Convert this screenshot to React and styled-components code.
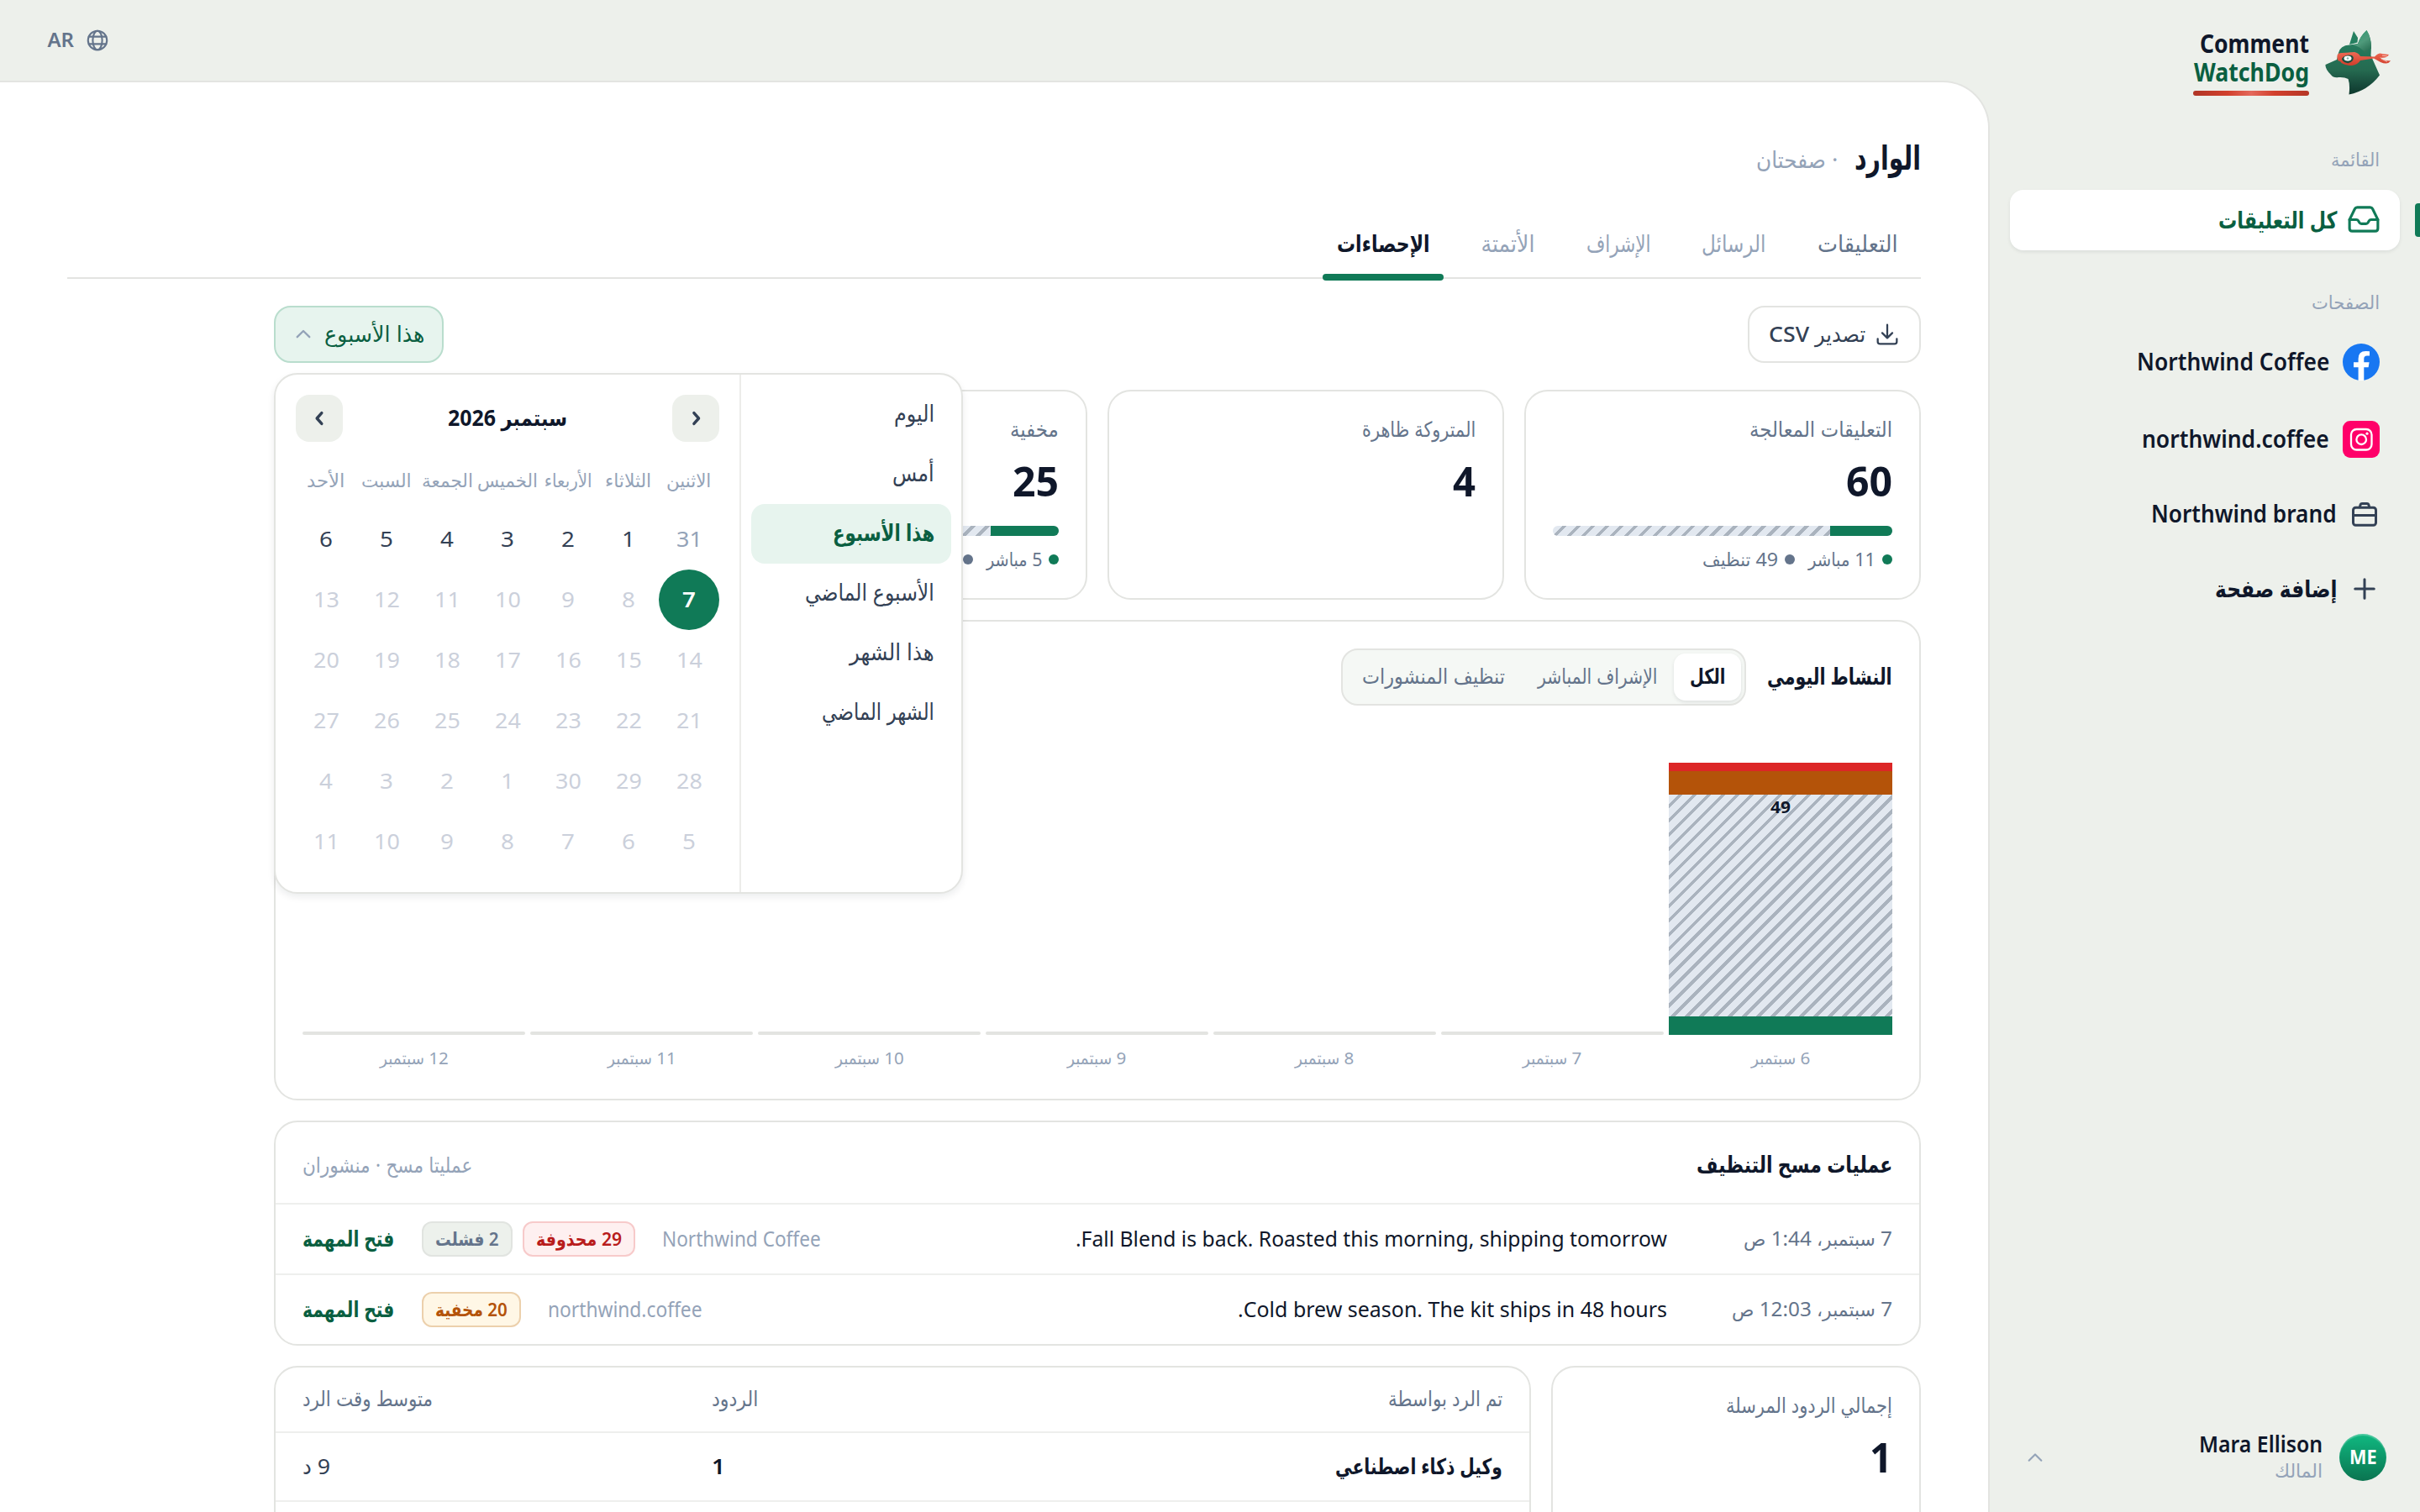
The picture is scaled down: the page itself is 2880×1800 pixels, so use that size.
import React, { useLayoutEffect, useRef, useState } from "react";
import styled, { createGlobalStyle, css } from "styled-components";

const weekDays = [
	["الاثنين", 53],
	["الثلاثاء", 55],
	["الأربعاء", 57],
	["الخميس", 72],
	["الجمعة", 61],
	["السبت", 60],
	["الأحد", 45],
];

const days = [
	31, 1, 2, 3, 4, 5, 6, 7, 8, 9, 10, 11, 12, 13, 14, 15, 16, 17, 18, 19, 20,
	21, 22, 23, 24, 25, 26, 27, 28, 29, 30, 1, 2, 3, 4, 5, 6, 7, 8, 9, 10, 11,
];

const presets = [
	["اليوم", 48],
	["أمس", 50],
	["هذا الأسبوع", 121],
	["الأسبوع الماضي", 154],
	["هذا الشهر", 101],
	["الشهر الماضي", 134],
];

const tabs = [
	{ label: "التعليقات", width: 152, text: 96, tone: "#64748b" },
	{ label: "الرسائل", width: 133, text: 76, tone: "#94a3b8" },
	{ label: "الإشراف", width: 134, text: 77, tone: "#94a3b8" },
	{ label: "الأتمتة", width: 121, text: 64, tone: "#94a3b8" },
	{ label: "الإحصاءات", width: 168, text: 111, tone: "#0f172a", active: true },
];

const stats = [
	{ label: "التعليقات المعالجة", width: 170, value: "60", valueWidth: 55, live: 11, liveWidth: 80, sweep: 49, sweepWidth: 90 },
	{ label: "المتروكة ظاهرة", width: 135, value: "4", valueWidth: 27 },
	{ label: "مخفية", width: 58, value: "25", valueWidth: 55, live: 5, liveWidth: 66, sweep: 20, sweepWidth: 90 },
	{ label: "محذوفة", width: 74, value: "31", valueWidth: 55, live: 2, liveWidth: 66, sweep: 29, sweepWidth: 90 },
];

const chartDays = [
	["6 سبتمبر", 70],
	["7 سبتمبر", 70],
	["8 سبتمبر", 70],
	["9 سبتمبر", 70],
	["10 سبتمبر", 82],
	["11 سبتمبر", 82],
	["12 سبتمبر", 82],
];

const sweeps = [
	{
		date: "7 سبتمبر، 1:44 ص",
		dateWidth: 177,
		post: "Fall Blend is back. Roasted this morning, shipping tomorrow.",
		postWidth: 704,
		page: "Northwind Coffee",
		pageWidth: 189,
		pills: [
			{ text: "29 محذوفة", width: 102, box: 134, kind: "red" },
			{ text: "2 فشلت", width: 75, box: 108, kind: "grey" },
		],
	},
	{
		date: "7 سبتمبر، 12:03 ص",
		dateWidth: 191,
		post: "Cold brew season. The kit ships in 48 hours.",
		postWidth: 511,
		page: "northwind.coffee",
		pageWidth: 184,
		pills: [{ text: "20 مخفية", width: 86, box: 118, kind: "amber" }],
	},
];

// Squeezes or stretches one line of text so that it takes exactly `w` pixels
const Fit = ({ w, children }) => {
	const ref = useRef(null);
	const [scale, setScale] = useState(1);

	useLayoutEffect(() => {
		setScale(w / ref.current.offsetWidth);
	}, [w, children]);

	return (
		<FitBox $w={w}>
			<FitText ref={ref} style={{ transform: `translateY(-1px) scaleX(${scale})` }}>
				{children}
			</FitText>
		</FitBox>
	);
};

const Icon = ({ size, stroke = 1.5, children }) => (
	<svg
		width={size}
		height={size}
		viewBox="0 0 24 24"
		fill="none"
		stroke="currentColor"
		strokeWidth={stroke}
		strokeLinecap="round"
		strokeLinejoin="round"
	>
		{children}
	</svg>
);

const DogLogo = () => (
	<svg width="80" height="80" viewBox="0 0 80 80">
		<defs>
			<linearGradient id="head" x1="0" y1="0" x2="0" y2="1">
				<stop offset="0" stopColor="#2f8f6b" />
				<stop offset="0.3" stopColor="#25775a" />
				<stop offset="0.62" stopColor="#256a50" />
				<stop offset="0.85" stopColor="#174a3b" />
				<stop offset="1" stopColor="#0d382c" />
			</linearGradient>
			<linearGradient id="ear" x1="0" y1="0" x2="0.5" y2="1">
				<stop offset="0" stopColor="#2c9a70" />
				<stop offset="0.6" stopColor="#4f9a7b" />
				<stop offset="1" stopColor="#2d7458" />
			</linearGradient>
			<linearGradient id="mask" x1="0" y1="0" x2="0" y2="1">
				<stop offset="0" stopColor="#ef6a54" />
				<stop offset="1" stopColor="#cf3d2b" />
			</linearGradient>
		</defs>
		<path d="M30 18 L35 2 L40 10 L39.500 15.500 Q34 17 30 18Z" fill="#258060" />
		<path
			d="M17 28 Q19 19 30 18.500 L40 17 Q43 8 50.500 1 Q56 10 56 20 L55.500 31 L66 54.500 Q52 73 29.500 77.500 Q31 66 28.500 59 Q24 56.500 17 57 Q11 58 8 54 Q1 47 1.500 42 L15 36Z"
			fill="url(#head)"
		/>
		<path d="M40 17 Q43 8 50.500 1 Q56 10 56 23 Q53 22 49.500 29 Q43 20 34 18.500Z" fill="url(#ear)" />
		<path
			d="M15.500 31 Q16 28 21 28 L36 27 Q41 28 43 32 L60 32.500 Q65 27 69 29 L77 30 Q74 35 66 33.500 Q72 38 79 37 Q76 43 67 39 L59 34.500 L43 37 Q40 42 33 43 Q22 43 19 38 Q15 38 15.500 31Z"
			fill="url(#mask)"
		/>
		<path d="M69 31 L75 32 M68 35 L75 38.500" stroke="#f7d7cf" strokeWidth="0.800" fill="none" />
		<path d="M21.500 34 Q26 29 33 31 Q36 33 34 37 Q30 42 24 39 Q20 37 21.500 34Z" fill="#1c4f3f" />
		<ellipse cx="28" cy="34.500" rx="4.500" ry="3" fill="#fff" />
		<circle cx="28" cy="34.500" r="1.300" fill="#7fb9a5" />
	</svg>
);

const Calendar = () => (
	<CalendarBox>
		<MonthRow>
			<MonthButton>
				<Icon size={34} stroke={2.4}>
					<path d="M10.500 7.500l4 4.500-4 4.500" />
				</Icon>
			</MonthButton>
			<Fit w={142}>سبتمبر 2026</Fit>
			<MonthButton>
				<Icon size={34} stroke={2.4}>
					<path d="M14 7.500l-4 4.500 4 4.500" />
				</Icon>
			</MonthButton>
		</MonthRow>
		<WeekRow>
			{weekDays.map(([name, w]) => (
				<WeekDay key={name}>
					<Fit w={w}>{name}</Fit>
				</WeekDay>
			))}
		</WeekRow>
		<DayGrid>
			{days.map((day, index) => (
				<Day key={index} $selected={index === 7} $outside={index === 0} $disabled={index > 7}>
					<Fit w={String(day).length > 1 ? 31 : 16}>{day}</Fit>
				</Day>
			))}
		</DayGrid>
	</CalendarBox>
);

const App = () => (
	<Shell>
		<GlobalStyle />
		<Sidebar>
			<Brand>
				<DogLogo />
				<BrandName>
					<BrandLine $color="#0f172a">
						<Fit w={130}>Comment</Fit>
					</BrandLine>
					<BrandLine $color="#0a5f41">
						<Fit w={137}>WatchDog</Fit>
					</BrandLine>
					<BrandRule />
				</BrandName>
			</Brand>
			<MenuLabel>
				<Fit w={58}>القائمة</Fit>
			</MenuLabel>
			<ActiveItem>
				<Icon size={44} stroke={1.7}>
					<path d="M2.800 12.300 L6.200 5.300 Q6.700 4.300 7.800 4.300 H16.200 Q17.300 4.300 17.800 5.300 L21.200 12.300 V18 Q21.200 19.700 19.500 19.700 H4.500 Q2.800 19.700 2.800 18 Z" />
					<path d="M2.800 12.300 H7.200 Q8.100 12.300 8.500 13 L9.200 14.200 Q9.600 14.900 10.500 14.900 H13.500 Q14.400 14.900 14.800 14.200 L15.500 13 Q15.900 12.300 16.800 12.300 H21.200" />
				</Icon>
				<Fit w={141}>كل التعليقات</Fit>
			</ActiveItem>
			<MenuLabel $pages>
				<Fit w={81}>الصفحات</Fit>
			</MenuLabel>
			<PageItem>
				<svg width="44" height="44" viewBox="0 0 44 44">
					<circle cx="22" cy="22" r="22" fill="#1877f2" />
					<path
						d="M18.600 44 V28.300 H13 V22.300 H18.600 V18 Q18.600 8.900 27.500 8.900 Q30 8.900 32 9.300 V14.500 H29 Q25.300 14.500 25.300 18 V22.300 H31.600 L30.600 28.300 H25.300 V44Z"
						fill="#fff"
					/>
				</svg>
				<Fit w={229}>Northwind Coffee</Fit>
			</PageItem>
			<PageItem>
				<svg width="44" height="44" viewBox="0 0 44 44">
					<rect width="44" height="44" rx="9" fill="#ff0069" />
					<rect x="10" y="10" width="24.500" height="24.500" rx="6.500" fill="none" stroke="#fff" strokeWidth="2.300" />
					<circle cx="22.200" cy="22.200" r="5.800" fill="none" stroke="#fff" strokeWidth="2.300" />
					<circle cx="29" cy="15.200" r="1.600" fill="#fff" />
				</svg>
				<Fit w={223}>northwind.coffee</Fit>
			</PageItem>
			<PageItem $height={86} $small>
				<Icon size={36} stroke={2}>
					<rect x="3" y="6.800" width="18" height="14" rx="2" />
					<path d="M8.200 6.500 L8.800 4.400 Q9.100 3.600 10 3.600 H14 Q14.900 3.600 15.200 4.400 L15.800 6.500 M3 13 H21" />
				</Icon>
				<Fit w={221}>Northwind brand</Fit>
			</PageItem>
			<PageItem $small>
				<Icon size={36} stroke={2}>
					<path d="M12 4.500 V19.500 M4.500 12 H19.500" />
				</Icon>
				<Fit w={145}>إضافة صفحة</Fit>
			</PageItem>
			<User>
				<Avatar>
					<Fit w={33}>ME</Fit>
				</Avatar>
				<UserText>
					<Fit w={147}>Mara Ellison</Fit>
					<UserRole>
						<Fit w={57}>المالك</Fit>
					</UserRole>
				</UserText>
				<Icon size={32} stroke={1.6}>
					<path d="M6.500 14.800 L12 9.300 L17.500 14.800" />
				</Icon>
			</User>
		</Sidebar>
		<Main>
			<TopBar>
				<Icon size={30} stroke={1.7}>
					<circle cx="12" cy="12" r="9" />
					<ellipse cx="12" cy="12" rx="4.500" ry="9" />
					<path d="M3.800 8.500 H20.200 M3.800 15.500 H20.200" />
				</Icon>
				<Fit w={32}>AR</Fit>
			</TopBar>
			<Panel>
				<TitleRow>
					<Title>
						<Fit w={79}>الوارد</Fit>
					</Title>
					<Subtitle>
						<Fit w={97}>· صفحتان</Fit>
					</Subtitle>
				</TitleRow>
				<Tabs>
					{tabs.map((tab) => (
						<Tab key={tab.label} $w={tab.width} $color={tab.tone} $active={tab.active}>
							<Fit w={tab.text}>{tab.label}</Fit>
						</Tab>
					))}
				</Tabs>
				<Content>
					<Toolbar>
						<ExportButton>
							<Icon size={32} stroke={1.7}>
								<path d="M12 3.500 V15 M7.500 10.800 L12 15.300 L16.500 10.800 M3.500 16 V18.500 Q3.500 20.500 5.500 20.500 H18.500 Q20.500 20.500 20.500 18.500 V16" />
							</Icon>
							<Fit w={115}>تصدير CSV</Fit>
						</ExportButton>
						<RangePicker>
							<RangeButton>
								<Fit w={119}>هذا الأسبوع</Fit>
								<Icon size={30} stroke={1.9}>
									<path d="M6.200 14.500 L12 8.800 L17.800 14.500" />
								</Icon>
							</RangeButton>
							<Popover>
								<Presets>
									{presets.map(([label, w], index) => (
										<Preset key={label} $active={index === 2}>
											<Fit w={w}>{label}</Fit>
										</Preset>
									))}
								</Presets>
								<Calendar />
							</Popover>
						</RangePicker>
					</Toolbar>
					<StatGrid>
						{stats.map((stat) => (
							<StatCard key={stat.label}>
								<StatLabel>
									<Fit w={stat.width}>{stat.label}</Fit>
								</StatLabel>
								<StatValue>
									<Fit w={stat.valueWidth}>{stat.value}</Fit>
								</StatValue>
								{stat.live && (
									<>
										<SplitBar>
											<SplitLive style={{ width: `${(stat.live / stat.value) * 100}%` }} />
										</SplitBar>
										<Legend>
											<Dot $color="#107a57" />
											<Fit w={stat.liveWidth}>{stat.live} مباشر</Fit>
											<Dot $color="#64748b" $spaced />
											<Fit w={stat.sweepWidth}>{stat.sweep} تنظيف</Fit>
										</Legend>
									</>
								)}
							</StatCard>
						))}
					</StatGrid>
					<ChartCard>
						<ChartHead>
							<CardTitle>
								<Fit w={149}>النشاط اليومي</Fit>
							</CardTitle>
							<Segments>
								<Segment $w={80} $active>
									<Fit w={42}>الكل</Fit>
								</Segment>
								<Segment $w={182}>
									<Fit w={142}>الإشراف المباشر</Fit>
								</Segment>
								<Segment $w={209}>
									<Fit w={170}>تنظيف المنشورات</Fit>
								</Segment>
							</Segments>
						</ChartHead>
						<Chart>
							{chartDays.map(([label, w], index) => (
								<ChartColumn key={label}>
									{index === 0 ? (
										<>
											<BarPart $h={10} $color="#dc2626" />
											<BarPart $h={28} $color="#b45309" />
											<SweepPart>
												<Fit w={24}>49</Fit>
											</SweepPart>
											<BarPart $h={22} $color="#107a57" />
										</>
									) : (
										<EmptyBar />
									)}
									<ChartLabel>
										<Fit w={w}>{label}</Fit>
									</ChartLabel>
								</ChartColumn>
							))}
						</Chart>
					</ChartCard>
					<Card>
						<SweepHead>
							<CardTitle>
								<Fit w={233}>عمليات مسح التنظيف</Fit>
							</CardTitle>
							<SweepMeta>
								<Fit w={202}>عمليتا مسح · منشوران</Fit>
							</SweepMeta>
						</SweepHead>
						{sweeps.map((sweep) => (
							<SweepRow key={sweep.post}>
								<SweepDate>
									<Fit w={sweep.dateWidth}>{sweep.date}</Fit>
								</SweepDate>
								<SweepPost>
									<Fit w={sweep.postWidth}>{sweep.post}</Fit>
								</SweepPost>
								<SweepPage>
									<Fit w={sweep.pageWidth}>{sweep.page}</Fit>
								</SweepPage>
								<Pills>
									{sweep.pills.map((pill) => (
										<Pill key={pill.text} $w={pill.box} $kind={pill.kind}>
											<Fit w={pill.width}>{pill.text}</Fit>
										</Pill>
									))}
								</Pills>
								<SweepLink>
									<Fit w={109}>فتح المهمة</Fit>
								</SweepLink>
							</SweepRow>
						))}
					</Card>
					<ReplyGrid>
						<StatCard>
							<StatLabel>
								<Fit w={198}>إجمالي الردود المرسلة</Fit>
							</StatLabel>
							<StatValue>
								<Fit w={27}>1</Fit>
							</StatValue>
						</StatCard>
						<Card>
							<ReplyHead>
								<Fit w={136}>تم الرد بواسطة</Fit>
								<Fit w={55}>الردود</Fit>
								<Fit w={155}>متوسط وقت الرد</Fit>
							</ReplyHead>
							<ReplyRow>
								<Strong>
									<Fit w={199}>وكيل ذكاء اصطناعي</Fit>
								</Strong>
								<Strong>
									<Fit w={16}>1</Fit>
								</Strong>
								<Fit w={33}>9 د</Fit>
							</ReplyRow>
						</Card>
					</ReplyGrid>
				</Content>
			</Panel>
		</Main>
	</Shell>
);

export default App;

const GlobalStyle = createGlobalStyle`
	* {
		box-sizing: border-box;
	}
	body {
		margin: 0;
		font-family: "Noto Sans", "DejaVu Sans Condensed", "DejaVu Sans", sans-serif;
		font-size: 26px;
		line-height: 1.5;
		color: #0f172a;
		background: #edf0eb;
	}
	button {
		font: inherit;
		cursor: pointer;
	}
	svg {
		display: block;
		flex: none;
	}
`;

const hatch = css`
	background: repeating-linear-gradient(135deg, #e2e8f0 0 8px, #aab3be 8px 12px);
`;

const FitBox = styled.span`
	display: block;
	flex: none;
	width: ${({ $w }) => $w}px;
	text-align: right;
	white-space: nowrap;
`;

const FitText = styled.span`
	display: inline-block;
	transform-origin: right center;
`;

const Shell = styled.div`
	display: flex;
	direction: rtl;
	width: 2880px;
	height: 1800px;
	overflow: hidden;
`;

const Sidebar = styled.aside`
	display: flex;
	flex-direction: column;
	flex: none;
	width: 512px;
	padding: 35px 24px 33px;
`;

const Brand = styled.div`
	display: flex;
	gap: 18px;
	height: 84px;
	padding-right: 10px;
`;

const BrandName = styled.div`
	display: flex;
	flex-direction: column;
	padding-top: 1px;
	font-size: 30px;
	font-weight: 700;
	line-height: 34px;
`;

const BrandLine = styled.div`
	height: 34px;
	color: ${({ $color }) => $color};
`;

const BrandRule = styled.div`
	width: 138px;
	height: 6px;
	margin-top: 4px;
	border-radius: 3px;
	background: linear-gradient(90deg, #b03526, #d2402d 30%, #e4695c 50%, #d2402d 70%, #b53626);
`;

const MenuLabel = styled.div`
	display: flex;
	align-items: center;
	height: 40px;
	margin: ${({ $pages }) => ($pages ? "42px 24px 5px" : "51px 24px 16px")};
	font-size: 22px;
	font-weight: 500;
	color: #94a3b8;
`;

const ActiveItem = styled.div`
	position: relative;
	display: flex;
	align-items: center;
	gap: 10px;
	height: 72px;
	padding-right: 21px;
	border-radius: 16px;
	background: #fff;
	box-shadow: 0 2px 4px rgba(15, 23, 42, 0.08);
	font-size: 28px;
	font-weight: 600;
	color: #0a5f41;
	svg {
		margin-top: -2px;
		color: #107a57;
	}
	&::after {
		content: "";
		position: absolute;
		top: 16px;
		right: -24px;
		width: 6px;
		height: 40px;
		border-radius: 4px 0 0 4px;
		background: #107a57;
	}
`;

const PageItem = styled.div`
	display: flex;
	align-items: center;
	gap: ${({ $small }) => ($small ? 15 : 16)}px;
	height: ${({ $height }) => $height || 92}px;
	padding-right: 24px;
	font-size: 28px;
	font-weight: 600;
	svg {
		color: #334155;
	}
`;

const User = styled.div`
	display: flex;
	align-items: center;
	margin-top: auto;
	padding-right: 16px;
	padding-left: 14px;
	font-size: 27px;
	font-weight: 600;
	> svg {
		margin-right: auto;
		color: #94a3b8;
	}
`;

const Avatar = styled.div`
	display: flex;
	align-items: center;
	justify-content: center;
	width: 56px;
	height: 56px;
	border-radius: 50%;
	background: linear-gradient(180deg, #10b981, #0a7450);
	box-shadow: inset 0 2px 1px rgba(255, 255, 255, 0.25);
	font-size: 23px;
	font-weight: 700;
	line-height: 1;
	color: #fff;
`;

const UserText = styled.div`
	margin-right: 20px;
	padding-bottom: 2px;
	line-height: 34px;
`;

const UserRole = styled.div`
	line-height: 28px;
	font-size: 23px;
	font-weight: 400;
	color: #94a3b8;
`;

const Main = styled.main`
	display: flex;
	flex-direction: column;
	flex: 1;
`;

const TopBar = styled.header`
	display: flex;
	flex: none;
	align-items: center;
	justify-content: flex-end;
	gap: 13px;
	height: 96px;
	padding-left: 56px;
	font-size: 24px;
	font-weight: 600;
	color: #64748b;
`;

const Panel = styled.section`
	flex: none;
	height: 1704px;
	padding: 59px 80px 0;
	border: solid #e3e4e1;
	border-width: 2px 2px 0 0;
	border-radius: 0 56px 0 0;
	background: #fff;
`;

const TitleRow = styled.div`
	display: flex;
	align-items: center;
	gap: 20px;
	height: 62px;
`;

const Title = styled.h1`
	margin: 0;
	font-size: 40px;
	font-weight: 700;
`;

const Subtitle = styled.span`
	padding-top: 6px;
	font-size: 27px;
	color: #94a3b8;
`;

const Tabs = styled.nav`
	display: flex;
	gap: 4px;
	height: 84px;
	margin-top: 29px;
	border-bottom: 2px solid #e3e4e1;
`;

const Tab = styled.div`
	position: relative;
	display: flex;
	align-items: center;
	justify-content: center;
	width: ${({ $w }) => $w}px;
	padding-top: 2px;
	font-size: 28px;
	font-weight: 500;
	color: ${({ $color }) => $color};
	${({ $active }) =>
		$active &&
		css`
			font-weight: 600;
			&::after {
				content: "";
				position: absolute;
				right: 12px;
				bottom: -4px;
				left: 12px;
				height: 8px;
				border-radius: 4px;
				background: #107a57;
			}
		`}
`;

const Content = styled.div`
	display: flex;
	flex-direction: column;
	gap: 24px;
	width: 1960px;
	padding-top: 32px;
`;

const Toolbar = styled.div`
	display: flex;
	justify-content: space-between;
	height: 68px;
	margin-bottom: 8px;
`;

const toolButton = css`
	display: flex;
	align-items: center;
	height: 68px;
	border-radius: 20px;
	font-size: 26px;
	font-weight: 500;
`;

const ExportButton = styled.button`
	${toolButton}
	gap: 10px;
	width: 206px;
	padding: 0 22px;
	border: 2px solid #e3e4e1;
	background: #fff;
	color: #334155;
`;

const RangePicker = styled.div`
	position: relative;
`;

const RangeButton = styled.button`
	${toolButton}
	gap: 10px;
	width: 202px;
	padding: 0 21px;
	border: 2px solid #b9ddcd;
	background: #e7f4ee;
	color: #0a5f41;
	svg {
		color: #94a3b8;
	}
`;

const Popover = styled.div`
	position: absolute;
	z-index: 2;
	top: 80px;
	left: 0;
	display: flex;
	width: 820px;
	height: 620px;
	border: 2px solid #e3e4e1;
	border-radius: 28px;
	background: #fff;
	box-shadow: 0 4px 8px rgba(15, 23, 42, 0.08);
`;

const Presets = styled.div`
	flex: 1;
	padding: 12px;
	border-left: 2px solid #ececea;
`;

const Preset = styled.div`
	display: flex;
	align-items: center;
	height: 71px;
	padding-right: 20px;
	border-radius: 16px;
	font-size: 27px;
	color: #334155;
	${({ $active }) =>
		$active &&
		css`
			background: #e7f4ee;
			font-weight: 600;
			color: #0a5f41;
		`}
`;

const CalendarBox = styled.div`
	width: 552px;
	padding: 24px;
`;

const MonthRow = styled.div`
	display: flex;
	align-items: center;
	justify-content: space-between;
	font-size: 26px;
	font-weight: 700;
`;

const MonthButton = styled.button`
	display: flex;
	align-items: center;
	justify-content: center;
	width: 56px;
	height: 56px;
	padding: 0;
	border: none;
	border-radius: 16px;
	background: #edf0eb;
	color: #334155;
`;

const WeekRow = styled.div`
	display: grid;
	grid-template-columns: repeat(7, 72px);
	height: 80px;
	padding-top: 12px;
	font-size: 22px;
	font-weight: 500;
	color: #94a3b8;
`;

const WeekDay = styled.div`
	display: flex;
	align-items: center;
	justify-content: center;
	height: 68px;
`;

const DayGrid = styled.div`
	display: grid;
	grid-template-columns: repeat(7, 72px);
	grid-auto-rows: 72px;
`;

const Day = styled.div`
	display: flex;
	align-items: center;
	justify-content: center;
	border-radius: 50%;
	color: ${({ $outside, $disabled }) => ($outside ? "#94a3b8" : $disabled ? "#cbd0db" : "#334155")};
	${({ $selected }) =>
		$selected &&
		css`
			background: #107a57;
			font-weight: 600;
			color: #fff;
		`}
`;

const Card = styled.section`
	border: 2px solid #e3e4e1;
	border-radius: 28px;
	background: #fff;
`;

const StatGrid = styled.div`
	display: grid;
	grid-template-columns: repeat(4, 1fr);
	gap: 24px;
`;

const StatCard = styled(Card)`
	height: 250px;
	padding: 25px 32px 0;
`;

const StatLabel = styled.div`
	height: 40px;
	font-size: 25px;
	line-height: 40px;
	font-weight: 500;
	color: #64748b;
`;

const StatValue = styled.div`
	height: 66px;
	margin-top: 9px;
	font-size: 49px;
	line-height: 66px;
	font-weight: 700;
`;

const SplitBar = styled.div`
	${hatch}
	height: 12px;
	margin-top: 20px;
	border-radius: 6px;
	overflow: hidden;
`;

const SplitLive = styled.div`
	height: 100%;
	background: #107a57;
`;

const Legend = styled.div`
	display: flex;
	align-items: center;
	gap: 8px;
	height: 34px;
	margin-top: 11px;
	font-size: 22px;
	color: #64748b;
`;

const Dot = styled.span`
	width: 12px;
	height: 12px;
	margin-right: ${({ $spaced }) => ($spaced ? 8 : 0)}px;
	border-radius: 50%;
	background: ${({ $color }) => $color};
`;

const CardTitle = styled.h2`
	margin: 0;
	font-size: 27px;
	font-weight: 600;
`;

const ChartCard = styled(Card)`
	height: 572px;
	padding: 32px 32px 0;
`;

const ChartHead = styled.div`
	display: flex;
	align-items: center;
	gap: 25px;
`;

const Segments = styled.div`
	display: flex;
	align-items: center;
	width: 482px;
	height: 68px;
	padding: 0 4px;
	border: 2px solid #e3e4e1;
	border-radius: 20px;
	background: #f5f8f5;
`;

const Segment = styled.div`
	display: flex;
	align-items: center;
	justify-content: center;
	width: ${({ $w }) => $w}px;
	height: 56px;
	border-radius: 14px;
	font-size: 25px;
	font-weight: 500;
	color: #64748b;
	${({ $active }) =>
		$active &&
		css`
			background: #fff;
			box-shadow: 0 2px 4px rgba(15, 23, 42, 0.1);
			font-weight: 600;
			color: #0f172a;
		`}
`;

const Chart = styled.div`
	display: grid;
	grid-template-columns: 266px repeat(6, 1fr);
	gap: 6px;
	height: 440px;
	margin-top: 20px;
`;

const ChartColumn = styled.div`
	display: flex;
	flex-direction: column;
	justify-content: flex-end;
`;

const BarPart = styled.div`
	height: ${({ $h }) => $h}px;
	background: ${({ $color }) => $color};
`;

const SweepPart = styled.div`
	${hatch}
	display: flex;
	justify-content: center;
	height: 264px;
	padding-top: 3px;
	font-size: 20px;
	line-height: 26px;
	font-weight: 700;
`;

const EmptyBar = styled.div`
	height: 4px;
	border-radius: 2px;
	background: #e3e4e1;
`;

const ChartLabel = styled.div`
	display: flex;
	justify-content: center;
	height: 68px;
	padding-top: 14px;
	font-size: 20px;
	color: #94a3b8;
`;

const SweepHead = styled.div`
	display: flex;
	align-items: center;
	justify-content: space-between;
	height: 96px;
	padding: 7px 32px 0;
`;

const SweepMeta = styled.span`
	font-size: 25px;
	color: #94a3b8;
`;

const SweepRow = styled.div`
	display: flex;
	align-items: center;
	height: 84px;
	padding: 0 32px;
	border-top: 2px solid #eeefed;
`;

const SweepDate = styled.div`
	width: 268px;
	font-size: 23px;
	color: #64748b;
`;

const SweepPost = styled.div`
	flex: 1;
`;

const SweepPage = styled.div`
	padding-top: 1px;
	font-size: 25px;
	color: #94a3b8;
`;

const Pills = styled.div`
	display: flex;
	gap: 12px;
	margin: 0 32px 0 33px;
`;

const pillKinds = {
	red: ["#b91c1c", "#fef0f0", "#f7caca"],
	grey: ["#64748b", "#edf1ec", "#e1e4e0"],
	amber: ["#b45309", "#fff7e6", "#ecd0ac"],
};

const Pill = styled.div`
	display: flex;
	align-items: center;
	justify-content: center;
	width: ${({ $w }) => $w}px;
	height: 42px;
	border: 2px solid ${({ $kind }) => pillKinds[$kind][2]};
	border-radius: 12px;
	background: ${({ $kind }) => pillKinds[$kind][1]};
	font-size: 22px;
	font-weight: 600;
	color: ${({ $kind }) => pillKinds[$kind][0]};
`;

const SweepLink = styled.div`
	font-weight: 600;
	color: #0a5f41;
`;

const ReplyGrid = styled.div`
	display: grid;
	grid-template-columns: 440px 1fr;
	gap: 24px;
`;

const replyColumns = css`
	display: grid;
	grid-template-columns: 887px 54px 1fr;
	align-items: center;
	padding: 0 32px;
	border-bottom: 2px solid #eeefed;
	> :not(:first-child) {
		justify-self: end;
	}
`;

const ReplyHead = styled.div`
	${replyColumns}
	height: 78px;
	font-size: 25px;
	font-weight: 500;
	color: #64748b;
`;

const ReplyRow = styled.div`
	${replyColumns}
	height: 82px;
	color: #334155;
`;

const Strong = styled.span`
	font-weight: 600;
	color: #0f172a;
`;
